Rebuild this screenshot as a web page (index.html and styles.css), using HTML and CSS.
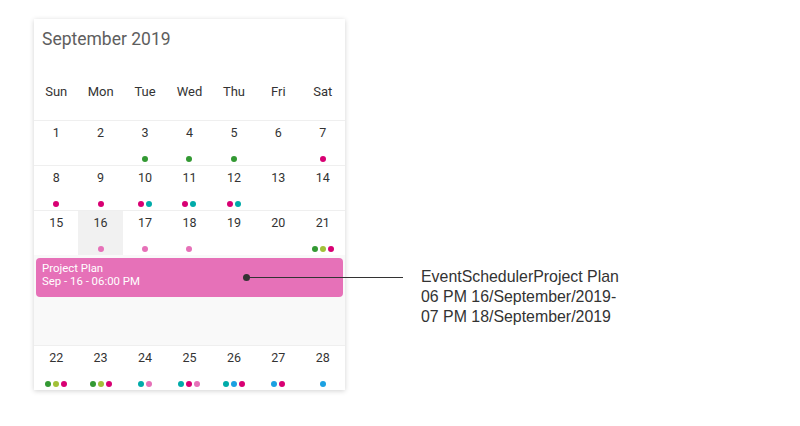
FILE: index.html
```html
<!DOCTYPE html>
<html>
<head>
<meta charset="utf-8">
<link rel="stylesheet" href="styles.css">
</head>
<body>
<div class="stage">
  <div class="card">
    <div class="title">September 2019</div>
    <div class="weekdays">
      <div>Sun</div><div>Mon</div><div>Tue</div><div>Wed</div><div>Thu</div><div>Fri</div><div>Sat</div>
    </div>
    <div class="week">
      <div class="day"><span class="num">1</span><span class="dots"></span></div>
      <div class="day"><span class="num">2</span><span class="dots"></span></div>
      <div class="day"><span class="num">3</span><span class="dots"><i class="green"></i></span></div>
      <div class="day"><span class="num">4</span><span class="dots"><i class="green"></i></span></div>
      <div class="day"><span class="num">5</span><span class="dots"><i class="green"></i></span></div>
      <div class="day"><span class="num">6</span><span class="dots"></span></div>
      <div class="day"><span class="num">7</span><span class="dots"><i class="magenta"></i></span></div>
    </div>
    <div class="week">
      <div class="day"><span class="num">8</span><span class="dots"><i class="magenta"></i></span></div>
      <div class="day"><span class="num">9</span><span class="dots"><i class="magenta"></i></span></div>
      <div class="day"><span class="num">10</span><span class="dots"><i class="magenta"></i><i class="teal"></i></span></div>
      <div class="day"><span class="num">11</span><span class="dots"><i class="magenta"></i><i class="teal"></i></span></div>
      <div class="day"><span class="num">12</span><span class="dots"><i class="magenta"></i><i class="teal"></i></span></div>
      <div class="day"><span class="num">13</span><span class="dots"></span></div>
      <div class="day"><span class="num">14</span><span class="dots"></span></div>
    </div>
    <div class="week">
      <div class="day"><span class="num">15</span><span class="dots"></span></div>
      <div class="day selected"><span class="num">16</span><span class="dots"><i class="pink"></i></span></div>
      <div class="day"><span class="num">17</span><span class="dots"><i class="pink"></i></span></div>
      <div class="day"><span class="num">18</span><span class="dots"><i class="pink"></i></span></div>
      <div class="day"><span class="num">19</span><span class="dots"></span></div>
      <div class="day"><span class="num">20</span><span class="dots"></span></div>
      <div class="day"><span class="num">21</span><span class="dots"><i class="green"></i><i class="lime"></i><i class="magenta"></i></span></div>
    </div>
    <div class="agenda">
      <div class="event">
        <div class="event-title">Project Plan</div>
        <div class="event-time">Sep - 16 - 06:00 PM</div>
      </div>
    </div>
    <div class="week">
      <div class="day"><span class="num">22</span><span class="dots"><i class="green"></i><i class="lime"></i><i class="magenta"></i></span></div>
      <div class="day"><span class="num">23</span><span class="dots"><i class="green"></i><i class="lime"></i><i class="magenta"></i></span></div>
      <div class="day"><span class="num">24</span><span class="dots"><i class="teal"></i><i class="pink"></i></span></div>
      <div class="day"><span class="num">25</span><span class="dots"><i class="teal"></i><i class="magenta"></i><i class="pink"></i></span></div>
      <div class="day"><span class="num">26</span><span class="dots"><i class="teal"></i><i class="blue"></i><i class="magenta"></i></span></div>
      <div class="day"><span class="num">27</span><span class="dots"><i class="blue"></i><i class="magenta"></i></span></div>
      <div class="day"><span class="num">28</span><span class="dots"><i class="blue"></i></span></div>
    </div>
  </div>
  <div class="pointer-dot"></div>
  <div class="pointer-line"></div>
  <div class="callout">EventSchedulerProject Plan<br>06 PM 16/September/2019-<br>07 PM 18/September/2019</div>
</div>
</body>
</html>
```
FILE: styles.css
```css
html, body {
  margin: 0;
  padding: 0;
  background: #ffffff;
}
.stage {
  position: relative;
  width: 800px;
  height: 426px;
  padding: 19px 0 0 34px;
  box-sizing: border-box;
}
.card {
  width: 311px;
  background: #ffffff;
  box-shadow: 0 1px 5px rgba(0, 0, 0, 0.18);
  font-family: Roboto, "Noto Sans", sans-serif;
  display: flex;
  flex-direction: column;
}
.title {
  height: 40px;
  padding-left: 8px;
  box-sizing: border-box;
  font-size: 17.5px;
  line-height: 40px;
  color: #5e5e5e;
}
.weekdays {
  display: grid;
  grid-template-columns: repeat(7, 1fr);
  height: 61px;
  align-items: center;
  font-size: 13px;
  color: #333;
  text-align: center;
  padding-top: 3px;
  box-sizing: border-box;
}
.week {
  display: grid;
  grid-template-columns: repeat(7, 1fr);
  height: 45px;
  border-top: 1px solid #efefef;
  box-sizing: border-box;
}
.day {
  display: flex;
  flex-direction: column;
  align-items: center;
  font-size: 12.5px;
  color: #333;
}
.day.selected {
  background: #f1f1f1;
}
.num {
  margin-top: 4px;
  line-height: 15px;
}
.dots {
  display: flex;
  gap: 2px;
  margin-top: 16px;
  height: 6px;
}
.dots i {
  width: 6px;
  height: 6px;
  border-radius: 50%;
  display: block;
}
.green { background: #339933; }
.lime { background: #a2c139; }
.magenta { background: #d80073; }
.teal { background: #00aba9; }
.pink { background: #e671b8; }
.blue { background: #1ba1e2; }
.agenda {
  height: 90px;
  background: #f9f9f9;
  padding: 3px 2px 0 2px;
  box-sizing: border-box;
}
.event {
  height: 39px;
  background: #e671b8;
  border-radius: 4px;
  color: #ffffff;
  font-size: 11.4px;
  padding: 4px 6px 0 6px;
  box-sizing: border-box;
  line-height: 13px;
}
.pointer-dot {
  position: absolute;
  left: 243px;
  top: 274px;
  width: 7px;
  height: 7px;
  border-radius: 50%;
  background: #333;
}
.pointer-line {
  position: absolute;
  left: 246px;
  top: 277px;
  width: 157px;
  height: 1px;
  background: #333;
}
.callout {
  position: absolute;
  left: 421px;
  top: 267px;
  font-family: "Liberation Sans", Arial, sans-serif;
  font-size: 15.9px;
  line-height: 20px;
  color: #333;
}
```
